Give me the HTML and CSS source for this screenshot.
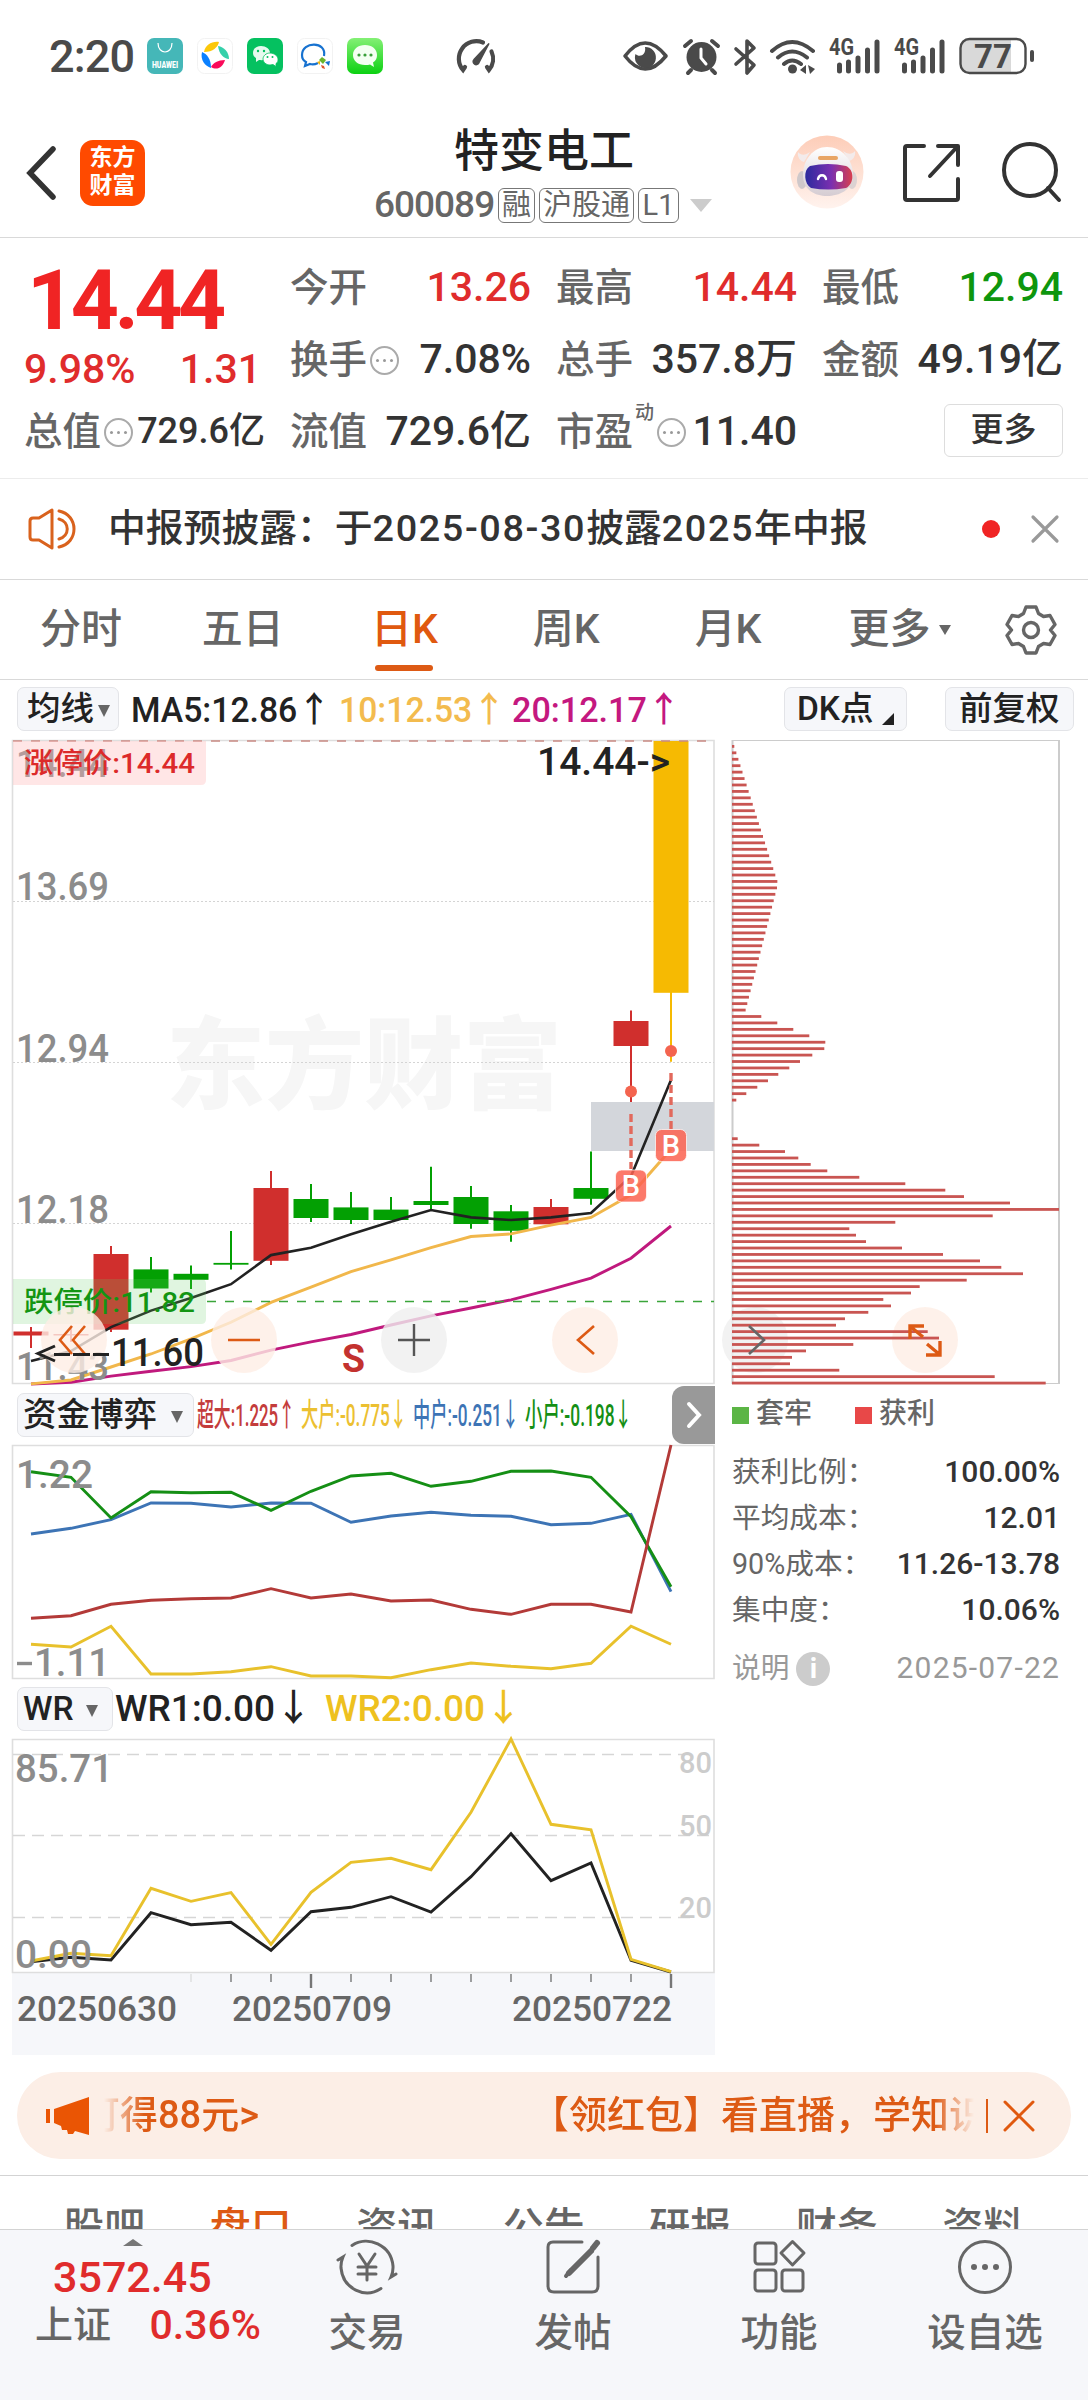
FILE: index.html
```html
<!DOCTYPE html>
<html lang="zh-CN">
<head>
  <meta charset="UTF-8" />
  <meta name="viewport" content="width=device-width, initial-scale=1.0"/>
  <title>特变电工 600089</title>
  <link rel="stylesheet" href="styles.css">
</head>
<body>

  <div class="status-bar">
    <span class="clock">2:20</span>
    <div class="app-icons">
      <svg width="36" height="36" viewBox="0 0 36 36">
        <rect width="36" height="36" rx="7" fill="#45b7b8"/>
        <path d="M11 5c0 12 14 12 14 0" fill="none" stroke="#fff" stroke-width="1.2"/>
        <text x="5" y="29.500" font-size="9" font-weight="900" fill="#fff" textLength="26" lengthAdjust="spacingAndGlyphs">HUAWEI</text>
      </svg>
      <svg width="36" height="36" viewBox="0 0 36 36">
        <rect x=".5" y=".5" width="35" height="35" rx="7" fill="#fff" stroke="#f2f2f2"/>
        <path d="M7 14C8 7 15 3 22 4c-1 5-6 10-15 10z" fill="#fcc80a"/>
        <path d="M21 8c6 1 11 6 11 13-5 0-10-5-11-13z" fill="#35d0aa"/>
        <path d="M5 14c5 2 9 7 9 16-6-2-11-8-9-16z" fill="#0a80ff"/>
        <path d="M14 29c2-4 7-7 14-7-2 7-8 11-14 7z" fill="#fa0a5a"/>
      </svg>
      <svg width="36" height="36" viewBox="0 0 36 36">
        <rect width="36" height="36" rx="7" fill="#05c160"/>
        <path d="M14 8c-5 0-8 3-8 7 0 2 1 4 3 5l0 4 3-2c8 1 11-3 11-7 0-4-4-7-9-7z" fill="#e6f9ee"/>
        <path d="M23 15c-4 0-7 3-7 6s3 6 7 6l3-.5 3 2v-3c2-1 2-3 2-4.500 0-3-4-6-8-6z" fill="#fff" stroke="#05c160" stroke-width=".8"/>
        <circle cx="11" cy="13" r="1.200" fill="#05c160"/><circle cx="17" cy="13" r="1.200" fill="#05c160"/>
        <circle cx="20.500" cy="19" r="1" fill="#05c160"/><circle cx="25.500" cy="19" r="1" fill="#05c160"/>
      </svg>
      <svg width="36" height="36" viewBox="0 0 36 36">
        <rect x=".5" y=".5" width="35" height="35" rx="7" fill="#fff" stroke="#f2f2f2"/>
        <path d="M27 18c3-15-22-15-22-1 0 3 2 6 4 7l-1 4 5-2c3 1 6 0 8-1" fill="none" stroke="#1772d0" stroke-width="2.200"/>
        <path d="M25 19l4 3-3 4-4-4z" fill="#6ab52c"/><path d="M28 24l5-1-1 5z" fill="#1772d0"/>
        <path d="M24 27l3 1 1 3-3-1z" fill="#e0542a"/><path d="M20 24l3-1 0 4z" fill="#f5b50a"/>
      </svg>
      <svg width="36" height="36" viewBox="0 0 36 36">
        <defs><linearGradient id="sms" x2="0" y2="1"><stop offset="0" stop-color="#84f075"/><stop offset="1" stop-color="#0cd112"/></linearGradient></defs>
        <rect width="36" height="36" rx="7" fill="url(#sms)"/>
        <path d="M18 7c-7 0-12 4-12 10s5 10 12 10c2 0 4 0 5-.6l4 2.600-1-4.500c3-2 4-4 4-7.500 0-6-5-10-12-10z" fill="#f4fff2"/>
        <circle cx="12" cy="17" r="1.600" fill="#3a9f3a"/><circle cx="18" cy="17" r="1.600" fill="#3a9f3a"/><circle cx="24" cy="17" r="1.600" fill="#3a9f3a"/>
      </svg>
    </div>
    <svg class="speed" width="42" height="38" viewBox="0 0 42 38" fill="none" stroke="#4a4a4a" stroke-width="4.200" stroke-linecap="round">
      <path d="M28 5.500A17.500 17.500 0 0 0 8 33l2-3M36.500 14.500A17.500 17.500 0 0 1 34 33l-2-3"/>
      <path d="M34 6.500L24 25.500a3 3 0 1 1-5-3z" fill="#4a4a4a" stroke-width="1.500"/>
    </svg>
    <svg class="system-icons" width="416" height="40" viewBox="620 36 416 40" fill="#4a4a4a">
      <path d="M625 56q20-26 41 0q-21 26-41 0z" fill="none" stroke="#4a4a4a" stroke-width="3.600" stroke-linejoin="round"/>
      <path d="M645 47a10.500 10.500 0 1 1-9.500 7c4 4 11 1 9.500-7z"/>
      <circle cx="701.500" cy="57" r="15"/>
      <path d="M701 49v9l5 6" fill="none" stroke="#fff" stroke-width="3" stroke-linecap="round"/>
      <path d="M685 46l6-5M718 46l-6-5M691 70l-3 3M712 70l3 3" stroke="#4a4a4a" stroke-width="4" stroke-linecap="round"/>
      <path d="M736 49l18 16-7 8V41l7 7-18 16" fill="none" stroke="#4a4a4a" stroke-width="3.600" stroke-linecap="round" stroke-linejoin="round"/>
      <path d="M772 51q20-18 41 0M778 57.500q14-12 29 0M784 64q8-7 17 0" fill="none" stroke="#4a4a4a" stroke-width="4" stroke-linecap="round"/>
      <circle cx="792.500" cy="69" r="4.500"/>
      <path d="M800 70l6-5v9zM808 65l7 4-5 5z"/>
      <text x="829" y="55" font-size="23" font-weight="700" textLength="25" lengthAdjust="spacingAndGlyphs">4G</text>
      <text x="894" y="55" font-size="23" font-weight="700" textLength="25" lengthAdjust="spacingAndGlyphs">4G</text>
      <path d="M839.500 65v6M848.500 62v9M858 58v13M867.500 50v21M877 42v29M904.500 65v6M913.500 62v9M923 58v13M932.500 50v21M942 42v29" stroke="#4a4a4a" stroke-width="5" stroke-linecap="round"/>
      <path d="M969 40h42v32h-42a8 8 0 0 1-8-8V48a8 8 0 0 1 8-8z" fill="#d9d9d9"/>
      <rect x="960.500" y="39" width="65" height="34" rx="9" fill="none" stroke="#4a4a4a" stroke-width="2.400"/>
      <rect x="1030" y="50" width="4" height="12" rx="2"/>
      <text x="974" y="67.500" font-size="33" font-weight="700" textLength="38" lengthAdjust="spacingAndGlyphs">77</text>
    </svg>
  </div>

  <div class="header">
    <svg class="back" width="34" height="60" viewBox="0 0 34 60"><path d="M31 6L8 30l23 24" fill="none" stroke="#333" stroke-width="5.500" stroke-linecap="round"/></svg>
    <div class="logo">东方<br>财富</div>
    <div class="title">
      <h1>特变电工</h1>
      <div class="code">
        <span class="num">600089</span>
        <span class="tag">融</span><span class="tag">沪股通</span><span class="tag l1">L1</span>
        <span class="drop"></span>
      </div>
    </div>
    <svg class="robot" width="74" height="76" viewBox="0 0 74 76">
      <defs>
        <linearGradient id="rbg" x2="0" y2="1"><stop offset="0" stop-color="#fdcdb8"/><stop offset="1" stop-color="#fff3ee"/></linearGradient>
        <linearGradient id="visor"><stop offset="0" stop-color="#2b2b9e"/><stop offset=".55" stop-color="#7a2fb0"/><stop offset="1" stop-color="#d8404e"/></linearGradient>
        <linearGradient id="head" x2="0" y2="1"><stop offset="0" stop-color="#fff"/><stop offset="1" stop-color="#d5ccd2"/></linearGradient>
      </defs>
      <circle cx="37" cy="38" r="36.500" fill="url(#rbg)"/>
      <path d="M8 18c3 4 8 3 12 0l-6 10c-4-1-7-5-6-10zM65 17c-3 4-8 3-12 0l6 10c4-1 7-5 6-10z" fill="#f3ebeb"/>
      <ellipse cx="12" cy="46" rx="5" ry="9" fill="#cfc8ca"/><ellipse cx="62" cy="46" rx="5" ry="9" fill="#dcd2d2"/>
      <path d="M37 13c-14 0-24 13-24 28 0 15 12 21 24 21s26-6 26-21c0-15-11-28-26-28z" fill="url(#head)"/>
      <rect x="28" y="22" width="20" height="4" rx="2" fill="#e8a565"/>
      <path d="M20 32q18-4 36 0c9 4 8 18 0 22q-18 3-35 0c-7-4-8-18-1-22z" fill="url(#visor)"/>
      <path d="M28 45c1-5 7-5 8 0" fill="none" stroke="#fff" stroke-width="2.400" stroke-linecap="round"/>
      <rect x="46" y="37" width="7" height="11" rx="3" fill="#fff"/>
    </svg>
    <svg class="share" width="60" height="60" viewBox="0 0 60 60" fill="none" stroke="#333" stroke-width="4" stroke-linecap="round" stroke-linejoin="round">
      <path d="M22 4H5q-2 0-2 2v50q0 2 2 2h49q2 0 2-2V37M36 4h20v19M55 5L28 34"/>
    </svg>
    <svg class="search" width="62" height="62" viewBox="0 0 62 62" fill="none" stroke="#333" stroke-width="4" stroke-linecap="round">
      <circle cx="29" cy="29" r="26"/><path d="M47 47l11 12"/>
    </svg>
  </div>

  <div class="quote">
    <div class="col">
      <div class="price">14.44</div>
      <div class="row change red"><span>9.98%</span><span>1.31</span></div>
      <div class="row small"><label>总值<i class="dots"></i></label><b>729.6亿</b></div>
    </div>
    <div class="col">
      <div class="row red"><label>今开</label><b>13.26</b></div>
      <div class="row"><label>换手<i class="dots"></i></label><b>7.08%</b></div>
      <div class="row"><label>流值</label><b>729.6亿</b></div>
    </div>
    <div class="col">
      <div class="row red"><label>最高</label><b>14.44</b></div>
      <div class="row"><label>总手</label><b>357.8万</b></div>
      <div class="row"><label>市盈<sup>动</sup><i class="dots"></i></label><b>11.40</b></div>
    </div>
    <div class="col">
      <div class="row green"><label>最低</label><b>12.94</b></div>
      <div class="row"><label>金额</label><b>49.19亿</b></div>
      <div class="row more-row"><button class="more">更多</button></div>
    </div>
  </div>

  <div class="notice">
    <svg width="52" height="44" viewBox="0 0 52 44" fill="none" stroke="#d9621d" stroke-width="3" stroke-linecap="round" stroke-linejoin="round">
      <path d="M25 3v38L12 33H6q-3 0-3-3V14q0-3 3-3h6zM32 4c20 4 20 32 0 36M32 12c11 3 11 17 0 20"/>
    </svg>
    <span class="notice-text">中报预披露：于<em>2025-08-30</em>披露<em>2025</em>年中报</span>
    <span class="red-dot"></span>
    <svg width="30" height="30" viewBox="0 0 30 30" stroke="#999" stroke-width="3.200" stroke-linecap="round"><path d="M3 3l24 24M27 3L3 27"/></svg>
  </div>

  <div class="tabs">
    <span>分时</span>
    <span>五日</span>
    <span class="active">日K</span>
    <span>周K</span>
    <span>月K</span>
    <span class="tab-more">更多<i></i></span>
    <svg width="52" height="52" viewBox="0 0 52 52" fill="none" stroke="#666" stroke-width="3.400" stroke-linejoin="round">
      <path d="M21 3h10l2.500 6.500 5 3L45 11.500l5 9-4.500 5.500 4.500 5.500-5 9-6.500-1-5 3L31 49H21l-2.500-6.500-5-3-6.500 1-5-9L6.500 26 2 20.500l5-9 6.500 1 5-3z"/>
      <circle cx="26" cy="26" r="7.500"/>
    </svg>
  </div>

  <div class="indicator">
    <button class="chip-btn">均线<i class="caret"></i></button>
    <svg class="reading" width="560" height="44">
      <text x="5" y="35" fill="#222" textLength="200" lengthAdjust="spacingAndGlyphs">MA5:12.86↑</text>
      <text x="213" y="35" fill="#f3bb4e" textLength="167" lengthAdjust="spacingAndGlyphs">10:12.53↑</text>
      <text x="386" y="35" fill="#c4187f" textLength="169" lengthAdjust="spacingAndGlyphs">20:12.17↑</text>
    </svg>
    <button class="chip-btn dk">DK点<i class="corner"></i></button>
    <button class="chip-btn fq">前复权</button>
  </div>

  <div class="charts">
    <div class="left">
      <svg id="kline" width="704" height="645"></svg>

      <div class="indicator fund">
        <button class="chip-btn">资金博弈<i class="caret"></i></button>
        <svg class="reading narrow" width="470" height="44">
          <text x="1" y="33" fill="#c43c3c" textLength="98" lengthAdjust="spacingAndGlyphs">超大:1.225↑</text>
          <text x="105" y="33" fill="#ecc031" textLength="106" lengthAdjust="spacingAndGlyphs">大户:-0.775↓</text>
          <text x="217" y="33" fill="#3d74b5" textLength="106" lengthAdjust="spacingAndGlyphs">中户:-0.251↓</text>
          <text x="329" y="33" fill="#158f15" textLength="107" lengthAdjust="spacingAndGlyphs">小户:-0.198↓</text>
        </svg>
        <div class="next"><svg width="16" height="28" viewBox="0 0 16 28"><path d="M3 3l10 11L3 25" fill="none" stroke="#fff" stroke-width="4" stroke-linecap="round"/></svg></div>
      </div>
      <svg id="fund" width="704" height="234"></svg>

      <div class="indicator wr">
        <button class="chip-btn">WR<i class="caret"></i></button>
        <svg class="reading" width="440" height="44">
          <text x="1" y="34" fill="#222" textLength="197" lengthAdjust="spacingAndGlyphs">WR1:0.00↓</text>
          <text x="211" y="34" fill="#eec11f" textLength="197" lengthAdjust="spacingAndGlyphs">WR2:0.00↓</text>
        </svg>
      </div>
      <svg id="wr" width="704" height="234"></svg>
      <svg id="axis" width="703" height="82"></svg>
    </div>

    <div class="right">
      <svg id="chips" width="328" height="645"></svg>
      <div class="legend">
        <span><i class="sq g"></i>套牢</span>
        <span><i class="sq r"></i>获利</span>
      </div>
      <div class="info"><label>获利比例：</label><b>100.00%</b></div>
      <div class="info"><label>平均成本：</label><b>12.01</b></div>
      <div class="info"><label>90%成本：</label><b>11.26-13.78</b></div>
      <div class="info"><label>集中度：</label><b>10.06%</b></div>
      <div class="info note"><label>说明<i>i</i></label><span>2025-07-22</span></div>
    </div>
  </div>

  <div class="promo">
    <svg width="46" height="38" viewBox="0 0 46 38" fill="#ea5504"><path d="M0 12h4v14H0zM8 12L43 0v38l-14-4-2 3-5 0-1-4-5 0-1-4-7-3z"/></svg>
    <div class="marquee"><span>可得88元&gt;</span><span class="second">【领红包】看直播，学知识</span></div>
    <span class="bar"></span>
    <svg width="32" height="32" viewBox="0 0 32 32" stroke="#e0590f" stroke-width="3" stroke-linecap="round"><path d="M2 2l28 28M30 2L2 30"/></svg>
  </div>

  <div class="sub-tabs">
    <span>股吧</span>
    <span class="active">盘口</span>
    <span>资讯</span>
    <span>公告</span>
    <span>研报</span>
    <span>财务</span>
    <span>资料</span>
  </div>

  <div class="bottom-bar">
    <div class="index">
      <i class="up"></i>
      <div class="index-value">3572.45</div>
      <div class="index-row"><span>上证</span><b>0.36%</b></div>
    </div>
    <div class="nav-item">
      <svg width="64" height="56" viewBox="0 0 64 56" fill="none" stroke="#666" stroke-width="3" stroke-linecap="round">
        <path d="M17 6.500C33-4 56 6 58 27c.3 5-.7 8-2 11l5-3M46 49.500C30 60 8 50 6 29c-.3-5 .7-8 2-11l-5 3"/>
        <path d="M24 15l8 12 8-12M32 27v14M23 28h18M23 35h18"/>
      </svg>
      交易
    </div>
    <div class="nav-item">
      <svg width="56" height="56" viewBox="0 0 56 56" fill="none" stroke="#666" stroke-width="3" stroke-linecap="round">
        <path d="M37 3H8Q3 3 3 8v39q0 6 6 6h38q6 0 6-6V18"/><path d="M52 4L48 9" stroke-width="6"/><path d="M46 12L24 34" stroke-width="6"/><path d="M26 31l-5 6" stroke-width="4"/>
      </svg>
      发帖
    </div>
    <div class="nav-item">
      <svg width="56" height="56" viewBox="0 0 56 56" fill="none" stroke="#666" stroke-width="3" stroke-linejoin="round">
        <rect x="4" y="4" width="21" height="21" rx="3"/><rect x="4" y="31" width="21" height="21" rx="3"/><rect x="31" y="31" width="21" height="21" rx="3"/>
        <path d="M41.500 2.500L53 14 41.500 26 30 14z"/>
      </svg>
      功能
    </div>
    <div class="nav-item">
      <svg width="56" height="56" viewBox="0 0 56 56" fill="#666">
        <circle cx="28" cy="28" r="25.500" fill="none" stroke="#666" stroke-width="3"/>
        <circle cx="17" cy="28" r="3"/><circle cx="28" cy="28" r="3"/><circle cx="39" cy="28" r="3"/>
      </svg>
      设自选
    </div>
  </div>

  <script src="script.js"></script>
</body>
</html>
```

FILE: styles.css
```css
* {
  box-sizing: border-box;
}
body {
  margin: 0;
  width: 1088px;
  height: 2400px;
  overflow: hidden;
  background: #fff;
  color: #333;
  font-family: Roboto, "Noto Sans CJK SC", sans-serif;
  font-weight: 500;
  line-height: 1.2;
}
svg {
  display: block;
  flex: none;
}
b, em, i {
  font-weight: 500;
  font-style: normal;
}
.red {
  color: #e02c2c;
}
.green {
  color: #0e960e;
}

/* status bar */
.status-bar {
  display: flex;
  align-items: center;
  height: 112px;
  padding-left: 49px;
}
.clock {
  width: 98px;
  padding-top: 2px;
  font-size: 45px;
  letter-spacing: -.8px;
  color: #4a4a4a;
}
.app-icons {
  display: flex;
  gap: 14px;
}
.speed {
  margin-left: 72px;
}
.system-icons {
  margin-left: 123px;
}

/* header */
.header {
  display: flex;
  height: 126px;
  padding-left: 22px;
  border-bottom: 1px solid #d9d9d9;
}
.back {
  margin-top: 31px;
}
.logo {
  width: 65px;
  height: 66px;
  margin: 28px 0 0 24px;
  padding-top: 4px;
  border-radius: 13px;
  background: #ff4a00;
  color: #fff;
  font-size: 23px;
  font-weight: 700;
  line-height: 28px;
  text-align: center;
}
.title {
  width: 400px;
  margin-left: 199px;
  text-align: center;
}
h1 {
  margin: 7px 0 0;
  font-size: 45px;
  font-weight: 500;
  line-height: 66px;
  color: #222;
}
.code {
  display: flex;
  align-items: center;
  height: 40px;
  padding-left: 30px;
  font-size: 37px;
  color: #666;
}
.code .num {
  width: 124px;
  text-align: left;
  letter-spacing: -1px;
}
.tag {
  height: 35px;
  margin-right: 4px;
  padding: 0 3px;
  border: 1px solid #777;
  border-radius: 6px;
  font-size: 29px;
  font-weight: 400;
  line-height: 33px;
}
.l1 {
  width: 41px;
}
.drop {
  margin-left: 7px;
  border: 11px solid transparent;
  border-top: 13px solid #ccc;
  border-bottom: 0;
}
.robot {
  margin: 22px 0 0 46px;
}
.share {
  margin: 30px 0 0 38px;
}
.search {
  margin: 29px 0 0 39px;
}

/* quote numbers */
.quote {
  display: flex;
  gap: 25px;
  height: 241px;
  padding: 14px 24px 0;
  border-bottom: 1px solid #ececec;
}
.col {
  width: 241px;
}
.row {
  display: flex;
  justify-content: space-between;
  align-items: center;
  height: 72px;
  font-size: 41px;
  white-space: nowrap;
}
.row label {
  display: flex;
  align-items: center;
  color: #666;
  font-size: 38.500px;
}
.row.small b {
  font-size: 36px;
}
.price {
  height: 88px;
  padding-left: 3px;
  font-size: 84px;
  font-weight: 700;
  line-height: 97px;
  letter-spacing: -4.500px;
  color: #f02424;
}
.change {
  height: 56px;
  padding-top: 4px;
}
.change span:last-child {
  margin-right: 4px;
}
.dots {
  position: relative;
  width: 29px;
  height: 29px;
  margin-left: 3px;
  border: 2px solid #aaa;
  border-radius: 50%;
}
.dots::before {
  content: "";
  position: absolute;
  left: 11px;
  top: 11px;
  width: 3px;
  height: 3px;
  border-radius: 50%;
  background: #999;
  box-shadow: -7px 0 #999, 7px 0 #999;
}
.row sup {
  align-self: flex-start;
  margin: -8px 0 0 2px;
  font-size: 19px;
  line-height: 24px;
}
.more-row {
  justify-content: flex-end;
}
.more {
  width: 119px;
  height: 53px;
  padding: 0;
  margin-bottom: 4px;
  border: 1px solid #ddd;
  border-radius: 6px;
  background: #fff;
  color: #333;
  font: 500 33px/50px Roboto, "Noto Sans CJK SC", sans-serif;
}

/* notice */
.notice {
  display: flex;
  align-items: center;
  height: 101px;
  padding-left: 27px;
  border-bottom: 1px solid #d9d9d9;
}
.notice-text {
  width: 874px;
  margin-left: 29px;
  font-size: 37.800px;
  white-space: nowrap;
}
.notice-text em {
  letter-spacing: 1.600px;
}
.red-dot {
  width: 18px;
  height: 18px;
  margin-right: 30px;
  border-radius: 50%;
  background: #f02424;
}

/* period tabs */
.tabs {
  display: flex;
  align-items: center;
  height: 100px;
  border-bottom: 1px solid #d9d9d9;
  font-size: 41px;
  color: #666;
}
.tabs span {
  display: flex;
  justify-content: center;
  align-items: center;
  position: relative;
  width: 161.800px;
  height: 100px;
}
.tabs .active {
  color: #e0590f;
}
.tabs .active::after {
  content: "";
  position: absolute;
  left: 51px;
  bottom: 9px;
  width: 58px;
  height: 6px;
  border-radius: 3px;
  background: #dd5a14;
}
.tabs .tab-more {
  width: 182px;
}
.tab-more i {
  margin-left: 9px;
  border: 6px solid transparent;
  border-top: 10px solid #666;
  border-bottom: 0;
}
.tabs svg {
  margin-left: 14px;
}

/* indicator rows */
.indicator {
  display: flex;
  height: 60px;
  padding: 7px 0 0 17px;
}
.chip-btn {
  display: flex;
  align-items: center;
  flex: none;
  width: 102px;
  height: 44px;
  padding: 0 0 1px 9px;
  border: 1px solid #e3e4e8;
  border-radius: 7px;
  background: #f6f7fa;
  color: #222;
  font: 500 33.500px/40px Roboto, "Noto Sans CJK SC", sans-serif;
  white-space: nowrap;
}
.caret {
  margin: 4px 0 0 4px;
  border: 6.500px solid transparent;
  border-top: 12px solid #666;
  border-bottom: 0;
}
.reading {
  margin-left: 7px;
  font-size: 35px;
  overflow: visible;
}
.dk {
  width: 123px;
  margin-left: 98px;
  padding-left: 12px;
}
.corner {
  align-self: flex-end;
  margin: 0 0 4px 8px;
  border-left: 12px solid transparent;
  border-bottom: 12px solid #222;
}
.fq {
  width: 129px;
  margin-left: 38px;
  padding-left: 13px;
}
.charts {
  display: flex;
  height: 1315px;
  padding-left: 12px;
}
.left {
  width: 703px;
}
.left .indicator {
  padding: 8px 0 0 5px;
}
.fund .chip-btn {
  width: 177px;
  padding-left: 5px;
}
.fund .caret {
  margin-left: 14px;
}
.fund .reading {
  margin-left: 2px;
  font-size: 32px;
}
.next {
  display: flex;
  justify-content: center;
  align-items: center;
  width: 43px;
  height: 58px;
  margin: -7px 0 0 6px;
  border-radius: 12px 0 0 12px;
  background: #999;
}
.wr .chip-btn {
  width: 96px;
  padding-left: 5px;
}
.wr .caret {
  margin-left: 12px;
}
.wr .reading {
  margin-left: 1px;
  font-size: 37px;
}
#kline, #fund, #wr, #axis, #chips {
  overflow: visible;
}
#axis {
  background: #f6f7fa;
}

/* chip distribution */
.right {
  width: 328px;
  margin-left: 17px;
}
.legend {
  display: flex;
  height: 62px;
  margin-bottom: 2px;
  font-size: 28px;
  color: #666;
}
.legend span {
  display: flex;
  align-items: center;
  width: 123px;
  height: 58px;
}
.sq {
  width: 17px;
  height: 17px;
  margin: 3px 7px 0 0;
}
.sq.g {
  background: #5bb545;
}
.sq.r {
  background: #e84848;
}
.info {
  display: flex;
  justify-content: space-between;
  align-items: center;
  height: 46px;
  font-size: 30px;
  white-space: nowrap;
}
.info label {
  display: flex;
  align-items: center;
  font-size: 28.700px;
  font-weight: 400;
  color: #666;
}
.info.note {
  margin-top: 12px;
}
.note label, .note span {
  color: #999;
}
.note span {
  font-weight: 400;
  letter-spacing: 1.200px;
}
.note i {
  width: 34px;
  height: 34px;
  margin: 2px 0 0 7px;
  border-radius: 50%;
  background: #ccc;
  color: #fff;
  font-size: 28px;
  font-weight: 700;
  line-height: 34px;
  text-align: center;
}

/* promo strip */
.promo {
  display: flex;
  align-items: center;
  width: 1054px;
  height: 87px;
  margin: 17px 0 16px 17px;
  padding-left: 29px;
  border-radius: 44px;
  background: #fceee6;
  color: #dd5a14;
  font-size: 38px;
}
.marquee {
  display: flex;
  width: 872px;
  margin-left: 12px;
  padding-bottom: 2px;
  overflow: hidden;
  line-height: 56px;
  white-space: nowrap;
  -webkit-mask-image: linear-gradient(90deg, transparent, #000 40px, #000 830px, transparent 870px);
  mask-image: linear-gradient(90deg, transparent, #000 40px, #000 830px, transparent 870px);
}
.marquee span {
  width: 449px;
  flex: none;
  margin-left: -22px;
}
.marquee .second {
  margin-left: 0;
}
.bar {
  width: 2px;
  height: 34px;
  margin: 0 15px 0 10px;
  background: #dd5a14;
}

/* lower tabs, cut off by the bottom bar */
.sub-tabs {
  display: flex;
  height: 54px;
  padding: 22px 31px 0;
  border-top: 1px solid #d3d3d3;
  overflow: hidden;
  font-size: 41px;
  line-height: 60px;
  color: #666;
}
.sub-tabs span {
  flex: none;
  width: 146.500px;
  text-align: center;
}
.sub-tabs .active {
  color: #dd5a14;
}
.bottom-bar {
  display: flex;
  height: 171px;
  border-top: 1px solid #d3d3d3;
  background: #f6f7fa;
}
.index {
  width: 264px;
  padding-top: 9px;
  color: #e02c2c;
}
.up {
  display: block;
  width: 0;
  margin-left: 123px;
  border: 10px solid transparent;
  border-bottom: 7px solid #777;
  border-top: 0;
}
.index-value {
  margin: 6px 0 0 53px;
  font-size: 43px;
  line-height: 50px;
}
.index-row {
  display: flex;
  justify-content: space-between;
  padding: 0 3px 0 35px;
  font-size: 41px;
  line-height: 46px;
}
.index-row span {
  font-size: 38px;
  color: #666;
}
.nav-item {
  display: flex;
  flex-direction: column;
  align-items: center;
  width: 206px;
  padding-top: 9px;
  font-size: 38.500px;
  line-height: 75px;
  color: #666;
}
```

FILE: script.js
```js
const RED = "#d02f2d", GREEN = "#03a003", YELLOW = "#f6ba02";

const x = i => 19 + 40 * i;
const line = (ys, color, w = 2.9) =>
  `<polyline points="${ys.map((y, i) => x(i) + "," + y).join(" ")}" fill="none" stroke="${color}" stroke-width="${w}"/>`;
const label = (t, lx, y, w, color = "#8c8c8c", size = 38, extra = "") =>
  `<text x="${lx}" y="${y}" fill="${color}" font-size="${size}" textLength="${w}" lengthAdjust="spacingAndGlyphs" ${extra}>${t}</text>`;
const frame = h => `<path d="M.5 .5H702V${h - .5}H.5z" fill="none" stroke="#dedede" stroke-width="1.6"/>`;
const round = (cx, cy, color) => `<circle cx="${cx}" cy="${cy}" r="33" fill="${color}" fill-opacity=".8"/>`;

// body top, body bottom, high, low, color
const candles = [
  [591.5, 595.5, 587, 608, RED], [594, 595.5, 587, 602, RED],
  [514, 589.7, 506, 592, RED], [529.4, 548.5, 517, 552.5, GREEN],
  [533.8, 539.8, 525.5, 549, GREEN], [522.9, 524.7, 491, 529.5, GREEN],
  [448, 520.8, 431, 525, RED], [459, 478, 444, 482, GREEN],
  [467.4, 480, 452, 484, GREEN], [469.6, 480, 457, 480, GREEN],
  [461, 465, 426.7, 470, GREEN], [457, 484, 446, 488.7, GREEN],
  [471.3, 490.8, 465, 501.7, GREEN], [467, 484.3, 459, 484.3, RED],
  [448, 458.8, 411.5, 464.8, GREEN], [281, 306, 270.5, 362, RED],
  [1, 252.8, 1, 321.7, YELLOW]
];
const ma5 = [620.9, 611, 587.1, 570.6, 558, 544.2, 515.1, 507.8, 494.3, 481.7, 470, 477.4, 480, 477.4, 473, 436.2, 340];
const ma10 = [643.9, 640, 627, 614, 598.8, 582.3, 562.4, 547.2, 531.6, 519.9, 507.7, 496.5, 493.9, 485.2, 477.4, 454.8, 409.3];
const ma20 = [644, 642.2, 636.1, 631.3, 626.6, 620.5, 610.1, 601.9, 594.5, 585, 575.8, 568, 559.8, 549.4, 538.1, 518.2, 486];

function badge(i, y) {
  return `<rect x="${x(i) - 15.5}" y="${y - 16}" width="31" height="32" rx="6" fill="#fb6250" fill-opacity=".85" stroke="#fff" stroke-opacity=".7"/>
    <text x="${x(i)}" y="${y + 10}" font-size="29" font-weight="500" fill="#fff" text-anchor="middle">B</text>`;
}

function drawKline() {
  let s = frame(644);
  s += `<text x="154" y="361" font-size="100" font-weight="900" fill="#f6f6f6" textLength="396" lengthAdjust="spacingAndGlyphs">东方财富</text>`;
  [161.5, 322.5, 483.5].forEach(y => s += `<path d="M1 ${y}H702" stroke="#d4d4d4" stroke-dasharray="2 2"/>`);
  s += `<rect x="579" y="362" width="123" height="49" fill="#d3d6db"/>`;
  candles.forEach(([t, b, h, l, c], i) => {
    s += `<path d="M${x(i)} ${h}V${l}" stroke="${c}" stroke-width="2"/><rect x="${x(i) - 17.5}" y="${t}" width="35" height="${b - t}" fill="${c}"/>`;
  });
  s += line(ma20, "#c0197d") + line(ma10, "#f1b74b") + line(ma5, "#222", 2.6);
  s += label("13.69", 4, 160, 93) + label("12.94", 4, 322, 93) + label("12.18", 4, 483, 93) + label("11.43", 4, 640, 93) + label("14.44", 4, 37, 93);
  // limit up / limit down
  s += `<path d="M1 1H702" stroke="#c98a84" stroke-width="1.4" stroke-dasharray="9 9"/><path d="M195 561.5H702" stroke="#3aa53a" stroke-width="1.4" stroke-dasharray="9 9"/>`;
  s += `<path d="M1 1H194V40q0 5-5 5H1z" fill="#fbb" fill-opacity=".36"/><path d="M1 539H189q5 0 5 5v35q0 5-5 5H1z" fill="#6c6" fill-opacity=".2"/>`;
  s += label("涨停价:14.44", 12, 33, 171, "#dc2a2a", 28) + label("跌停价:11.82", 12, 572, 171, "#139513", 28);
  s += label("14.44->", 525, 35, 133, "#222");
  s += [[62, "#feeee5"], [232, "#feeee5"], [402, "#efefef"], [573, "#feeee5"]].map(([cx, c]) => round(cx, 600, c)).join("");
  s += `<g fill="none" stroke="#dd5a14" stroke-width="2.6"><path d="M60 586L48 600l12 14M73 586L61 600l12 14M216 600h32M582 586l-16 14 16 14"/></g>
    <path d="M386 600h32M402 584v32" stroke="#555" stroke-width="2.4"/>`;
  // lowest price pointer
  s += `<path d="M43 606L26 613.500l17 7.500M42 614.500h16M61 614.500h17M81 614.500h16" fill="none" stroke="#222" stroke-width="3"/>`;
  s += label("11.60", 99, 626, 93, "#222") + label("S", 330, 632, 23, "#c3322f", 38, 'font-weight="700"');
  s += `<path d="M619 374V429M659 333V389" stroke="#e2695c" stroke-width="3.4" stroke-dasharray="8 4"/>
    <circle cx="619" cy="351.500" r="6" fill="#f4644f"/><circle cx="659" cy="311" r="6" fill="#f4644f"/>`;
  s += badge(15, 446) + badge(16, 405.5);
  document.getElementById("kline").innerHTML = s;
}

function drawFund() {
  document.getElementById("fund").innerHTML = frame(234) +
    line([89, 83.3, 74.7, 58, 58.3, 62, 58, 58.3, 77.3, 71, 67.3, 70.3, 71.3, 79.7, 78.3, 69.3, 146.7], "#3d74b5") +
    line([26.7, 32.3, 73, 46.7, 47.7, 47.3, 65.3, 46.3, 31, 28.3, 41.3, 36.3, 26.3, 26, 32.3, 71.7, 141.7], "#158f15") +
    line([173.3, 170.7, 159.3, 155.3, 153.7, 153, 143.7, 153, 149, 156, 155, 164.3, 169.3, 159.3, 159.3, 167, 0], "#b33a38") +
    line([199.3, 202, 181.3, 229, 229, 226.7, 221.7, 231, 231, 232.7, 224.7, 218, 221.3, 223.7, 218.3, 181.3, 199.3], "#e8c12c") +
    label("1.22", 4, 43, 77) +
    `<path d="M5 218.500h15" stroke="#8c8c8c" stroke-width="3.4"/>` + label("1.11", 22, 231, 76);
}

function drawWr() {
  let s = frame(234);
  [15.5, 96.5, 178.5].forEach(y => s += `<path d="M1 ${y}H${y === 96.5 ? 702 : 680}" stroke="#d6d6d6" stroke-width="1.4" stroke-dasharray="12 7"/>`);
  s += label("80", 667, 34, 33, "#ccc", 29) + label("50", 667, 97, 33, "#ccc", 29) + label("20", 667, 179, 33, "#ccc", 29);
  s += line([222.7, 218.3, 221, 173.7, 185.7, 183.3, 211.3, 172.7, 168.3, 157.7, 173, 137.7, 94.7, 141.7, 124, 221.3, 233], "#222");
  s += line([222, 214.3, 216.7, 149.3, 162.3, 153.7, 205.3, 153.3, 123.3, 119.3, 130.7, 73.3, 0, 85.3, 90.7, 220.3, 232.7], "#e8c12c");
  s += label("85.71", 3, 43, 98) + label("0.00", 3, 229, 77);
  document.getElementById("wr").innerHTML = s;

  let a = "";
  for (let i = 4; i < 17; i++) {
    const major = i === 7 || i === 16;
    a += `<path d="M${x(i)} 1V${major ? 15 : 9}" stroke="${i === 4 ? "#ddd" : "#777"}" stroke-width="${major ? 2.4 : 1.4}"/>`;
  }
  a += label("20250630", 5, 48, 160, "#666", 35) + label("20250709", 220, 48, 160, "#666", 35) + label("20250722", 500, 48, 160, "#666", 35);
  document.getElementById("axis").innerHTML = a;
}

function drawChips() {
  const bars = [];
  for (let i = 0; i < 22; i++) bars.push(2.3 + 2.05 * i);
  for (let i = 0; i < 20; i++) bars.push(45 - 1.65 * i);
  bars.push(29.3, 45.3, 61.3, 77.3, 93.3, 92.3, 80.3, 68, 57.3, 46.3, 36, 25.3, 14.3, 4.3, 0, 0, 0, 0, 0,
    5.7, 27.3, 53, 66.3, 78.7, 95.3, 127.3, 173.3, 213.3, 232, 278, 327, 260.7, 163.3, 117.3, 124, 134, 170, 211,
    248, 269.3, 291, 234.7, 187.7, 179, 151.3, 159, 136.3, 113, 104, 195.7, 207, 121.3, 74, 60, 58, 107.3, 262.7, 313.7);
  let s = `<path d="M0 .5H327V643.500H0" fill="none" stroke="#ccc"/><path d="M.5 0V644M327 0V644" stroke="#ccc" stroke-width="2"/>`;
  s += round(23, 600, "#efefef") + round(193, 600, "#feeee5");
  bars.forEach((w, i) => {
    if (w) s += `<rect x="0" y="${5 + 6.431 * i}" width="${w}" height="2.800" fill="#c95552"/>`;
  });
  s += `<path d="M17 586l15 14-15 14" fill="none" stroke="#666" stroke-width="2.6"/>
    <path d="M178 599V586h14M179 587l12 10M208 601v14h-14M207 614l-12-10" fill="none" stroke="#dd5a14" stroke-width="3.400"/>`;
  document.getElementById("chips").innerHTML = s;
}

drawKline();
drawFund();
drawWr();
drawChips();
```
